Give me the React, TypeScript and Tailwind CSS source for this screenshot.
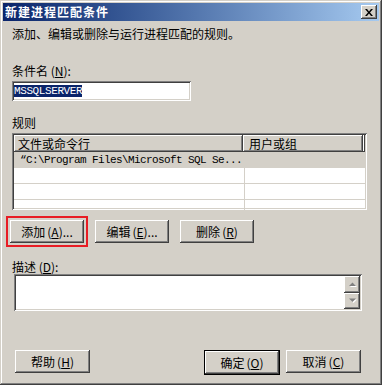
const raised =
  'bg-[#d4d0c8] shadow-[inset_-1px_-1px_0_#404040,inset_1px_1px_0_#ffffff,inset_-2px_-2px_0_#808080,inset_2px_2px_0_#d4d0c8]'
const sunken =
  'shadow-[inset_1px_1px_0_#808080,inset_-1px_-1px_0_#ffffff,inset_2px_2px_0_#404040,inset_-2px_-2px_0_#d4d0c8]'

function Btn({ label, k, rest = '', className = '' }: { label: string; k: string; rest?: string; className?: string }) {
  return (
    <button className={`h-[23px] w-[74px] flex items-center justify-center text-[12px] leading-[12px] ${raised} ${className}`}>
      {label}
      <span className="ml-[2px]">
        (<u>{k}</u>)
      </span>
      {rest}
    </button>
  )
}

function Arrow({ up }: { up?: boolean }) {
  const pts = up ? '3.5,0.5 7,4 0,4' : '0,0.5 7,0.5 3.5,4'
  return (
    <div className={`h-[17px] w-[16px] flex items-center justify-center ${raised}`}>
      <svg width="7" height="5" viewBox="0 0 7 5" className="overflow-visible">
        <polygon points={pts} fill="#ffffff" transform="translate(1,1)" />
        <polygon points={pts} fill="#808080" />
      </svg>
    </div>
  )
}

export default function App() {
  return (
    <div className="relative w-[382px] h-[385px] bg-[#d4d0c8] p-[3px] text-black text-[12px] leading-[12px] font-['Noto_Sans_CJK_SC','Liberation_Sans',sans-serif] shadow-[inset_-1px_-1px_0_#404040,inset_1px_1px_0_#d4d0c8,inset_-2px_-2px_0_#808080,inset_2px_2px_0_#ffffff]">
      {/* title bar */}
      <div className="h-[18px] flex items-center justify-between bg-linear-to-r from-[#0a246a] to-[#a6caf0] pl-[2px] pr-[2px]">
        <span className="text-white font-bold text-[12px] leading-[12px] tracking-[1px] font-['Noto_Sans_CJK_SC',sans-serif]">
          新建进程匹配条件
        </span>
        <div className={`w-[16px] h-[14px] flex items-center justify-center ${raised}`}>
          <svg width="8" height="7" viewBox="0 0 8 7">
            <path d="M0 0h2l2 2.5L6 0h2L5 3.5 8 7H6L4 4.5 2 7H0l3-3.5z" fill="#000" />
          </svg>
        </div>
      </div>

      <div className="pl-[9px]">
        <div className="mt-[7px]">添加、编辑或删除与运行进程匹配的规则。</div>

        <div className="mt-[25px]">
          条件名 (<u>N</u>):
        </div>
        <div className={`mt-[4px] h-[20px] w-[179px] bg-white flex items-center pl-[2px] ${sunken}`}>
          <span className="bg-[#0a246a] text-white h-[12px] flex items-center font-['Liberation_Mono',monospace] text-[11px] tracking-[-0.4px]">
            MSSQLSERVER
          </span>
        </div>

        <div className="mt-[16px]">规则</div>
        <div className={`mt-[4px] h-[77px] w-[355px] bg-white p-[2px] ${sunken}`}>
          <div className="flex h-[17px] bg-[#d4d0c8]">
            <div className={`w-[229px] flex items-end pl-[4px] pb-[2px] ${raised}`}>文件或命令行</div>
            <div className={`w-[120px] flex items-end pl-[6px] pb-[2px] ${raised}`}>用户或组</div>
            <div className={`flex-1 ${raised}`} />
          </div>
          <div className="h-[16px] bg-[#d4d0c8] flex items-center pl-[6px] font-['Liberation_Mono',monospace] text-[11px] tracking-[-0.6px]">
            “C:\Program Files\Microsoft SQL Se...
          </div>
          {[0, 1, 2].map((i) => (
            <div key={i} className="h-[16px] flex border-b border-[#d4d0c8]">
              <div className="w-[231px] border-r border-[#d4d0c8]" />
              <div className="flex-1" />
            </div>
          ))}
        </div>

        <div className="mt-[10px] flex">
          <div className="ml-[-2px] outline-2 outline-[#e81c24] outline-offset-[2px]">
            <Btn label="添加" k="A" rest="..." />
          </div>
          <Btn label="编辑" k="E" rest="..." className="ml-[11px] w-[73px]" />
          <Btn label="删除" k="R" className="ml-[11px]" />
        </div>

        <div className="mt-[18px]">
          描述 (<u>D</u>):
        </div>
        <div className={`mt-[1px] ml-[2px] h-[37px] w-[348px] bg-white flex justify-end p-[2px] ${sunken}`}>
          <div className="flex flex-col">
            <Arrow up />
            <Arrow />
          </div>
        </div>

        <div className="mt-[39px] flex">
          <Btn label="帮助" k="H" className="ml-[3px] w-[75px]" />
          <div className="ml-[114px] border border-black">
            <Btn label="确定" k="O" className="w-[73px] h-[21px]" />
          </div>
          <Btn label="取消" k="C" className="ml-[6px] w-[75px]" />
        </div>
      </div>
    </div>
  )
}
